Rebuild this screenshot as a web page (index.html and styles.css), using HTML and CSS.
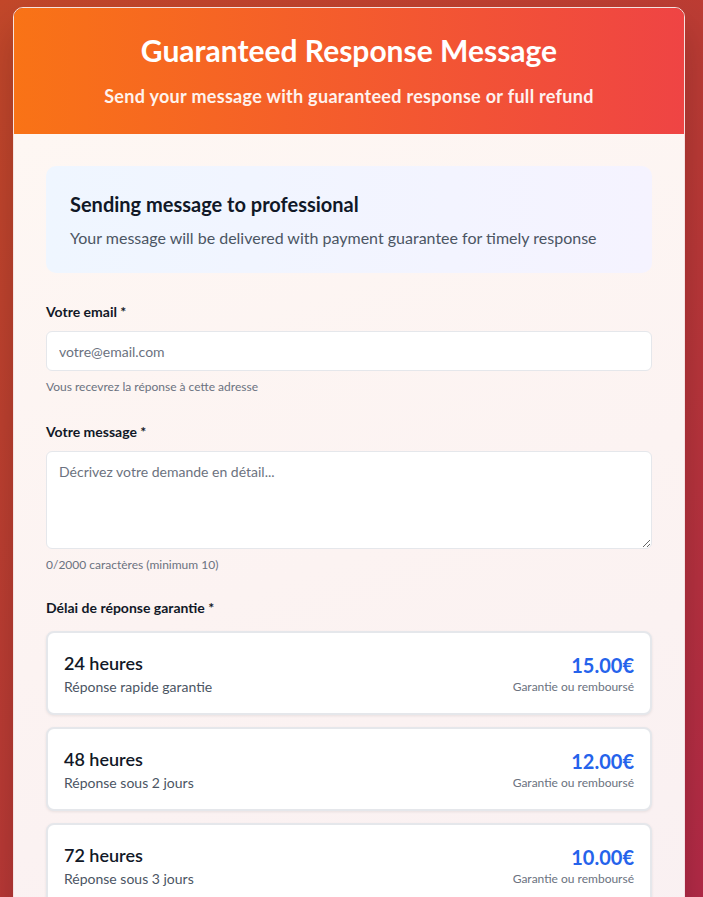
FILE: index.html
```html
<!DOCTYPE html>
<html lang="fr">
<head>
<meta charset="utf-8">
<title>Guaranteed Response Message</title>
<link rel="stylesheet" href="styles.css">
</head>
<body>
<div class="page">
  <div class="card">
    <header class="header">
      <h1 class="title">Guaranteed Response Message</h1>
      <p class="subtitle">Send your message with guaranteed response or full refund</p>
    </header>
    <div class="body">
      <div class="info">
        <h2 class="info-title">Sending message to professional</h2>
        <p class="info-text">Your message will be delivered with payment guarantee for timely response</p>
      </div>

      <div class="group">
        <label class="label" for="email">Votre email *</label>
        <input class="input" id="email" type="email" placeholder="votre@email.com">
        <p class="help">Vous recevrez la réponse à cette adresse</p>
      </div>

      <div class="group">
        <label class="label" for="msg">Votre message *</label>
        <textarea class="input textarea" id="msg" placeholder="Décrivez votre demande en détail..."></textarea>
        <p class="help">0/2000 caractères (minimum 10)</p>
      </div>

      <div class="group">
        <div class="label">Délai de réponse garantie *</div>
        <div class="options">
          <div class="option">
            <div class="opt-left">
              <div class="opt-title">24 heures</div>
              <div class="opt-sub">Réponse rapide garantie</div>
            </div>
            <div class="opt-right">
              <div class="price">15.00€</div>
              <div class="opt-note">Garantie ou remboursé</div>
            </div>
          </div>
          <div class="option">
            <div class="opt-left">
              <div class="opt-title">48 heures</div>
              <div class="opt-sub">Réponse sous 2 jours</div>
            </div>
            <div class="opt-right">
              <div class="price">12.00€</div>
              <div class="opt-note">Garantie ou remboursé</div>
            </div>
          </div>
          <div class="option">
            <div class="opt-left">
              <div class="opt-title">72 heures</div>
              <div class="opt-sub">Réponse sous 3 jours</div>
            </div>
            <div class="opt-right">
              <div class="price">10.00€</div>
              <div class="opt-note">Garantie ou remboursé</div>
            </div>
          </div>
        </div>
      </div>
    </div>
  </div>
</div>
</body>
</html>
```
FILE: styles.css
```css
* { box-sizing: border-box; }
html, body { margin: 0; padding: 0; }
body {
  font-family: "Lato", "Liberation Sans", sans-serif;
  background: linear-gradient(135deg, #c3482a 0%, #bb3a36 50%, #b3284a 100%);
  min-height: 100vh;
  color: #111827;
}
.page {
  padding: 7px 18px 24px 13px;
}
.card {
  width: 672px;
  border: 1px solid rgba(255, 255, 255, 0.85);
  border-radius: 10px;
  overflow: hidden;
  box-shadow: 0 20px 40px rgba(0, 0, 0, 0.2);
}
.header {
  background: linear-gradient(90deg, #f97316 0%, #ef4444 100%);
  color: #fff;
  text-align: center;
  padding: 24px 24px 24px;
}
.title {
  margin: 0 0 14px;
  font-size: 30px;
  line-height: 36px;
  font-weight: 700;
}
.subtitle {
  margin: 0;
  font-size: 18px;
  line-height: 28px;
  font-weight: 700;
  letter-spacing: 0.3px;
  opacity: 0.92;
}
.body {
  background: linear-gradient(160deg, #fef7f3 0%, #fcf3f2 50%, #f9f0f2 100%);
  padding: 32px 32px 40px;
}
.info {
  background: linear-gradient(90deg, #eff6ff 0%, #f5f3ff 100%);
  border-radius: 10px;
  padding: 24px 24px 23px;
  margin-bottom: 29px;
}
.info-title {
  margin: 0 0 8px;
  font-size: 20px;
  line-height: 28px;
  font-weight: 700;
  color: #111827;
}
.info-text {
  margin: 0;
  font-size: 16px;
  line-height: 24px;
  color: #4b5563;
}
.group { margin-bottom: 27px; }
.label {
  display: block;
  font-size: 14px;
  line-height: 20px;
  font-weight: 700;
  color: #111827;
  margin-bottom: 9px;
}
.input {
  display: block;
  width: 100%;
  height: 40px;
  padding: 0 12px;
  border: 1px solid #e5e7eb;
  border-radius: 6px;
  background: #fff;
  font-family: inherit;
  font-size: 14px;
  color: #111827;
  outline: none;
}
.input::placeholder { color: #6b7280; }
.textarea {
  height: 98px;
  padding: 10px 12px;
  line-height: 20px;
  resize: vertical;
}
.help {
  margin: 8px 0 0;
  font-size: 12px;
  line-height: 16px;
  color: #6b7280;
}
.group:nth-of-type(3) { margin-bottom: 25px; }
.options {
  display: flex;
  flex-direction: column;
  gap: 12px;
  margin-top: 13px;
}
.option {
  display: flex;
  justify-content: space-between;
  align-items: center;
  background: #fff;
  border: 2px solid #e5e7eb;
  border-radius: 8px;
  padding: 16px;
  box-shadow: 0 1px 3px rgba(0, 0, 0, 0.08);
}
.opt-title {
  font-size: 18px;
  line-height: 28px;
  font-weight: 600;
  color: #111827;
}
.opt-sub {
  font-size: 14px;
  line-height: 20px;
  color: #4b5563;
}
.opt-right { text-align: right; }
.price {
  font-size: 20px;
  line-height: 28px;
  font-weight: 700;
  color: #2563eb;
}
.opt-note {
  font-size: 12px;
  line-height: 16px;
  color: #6b7280;
}
```
